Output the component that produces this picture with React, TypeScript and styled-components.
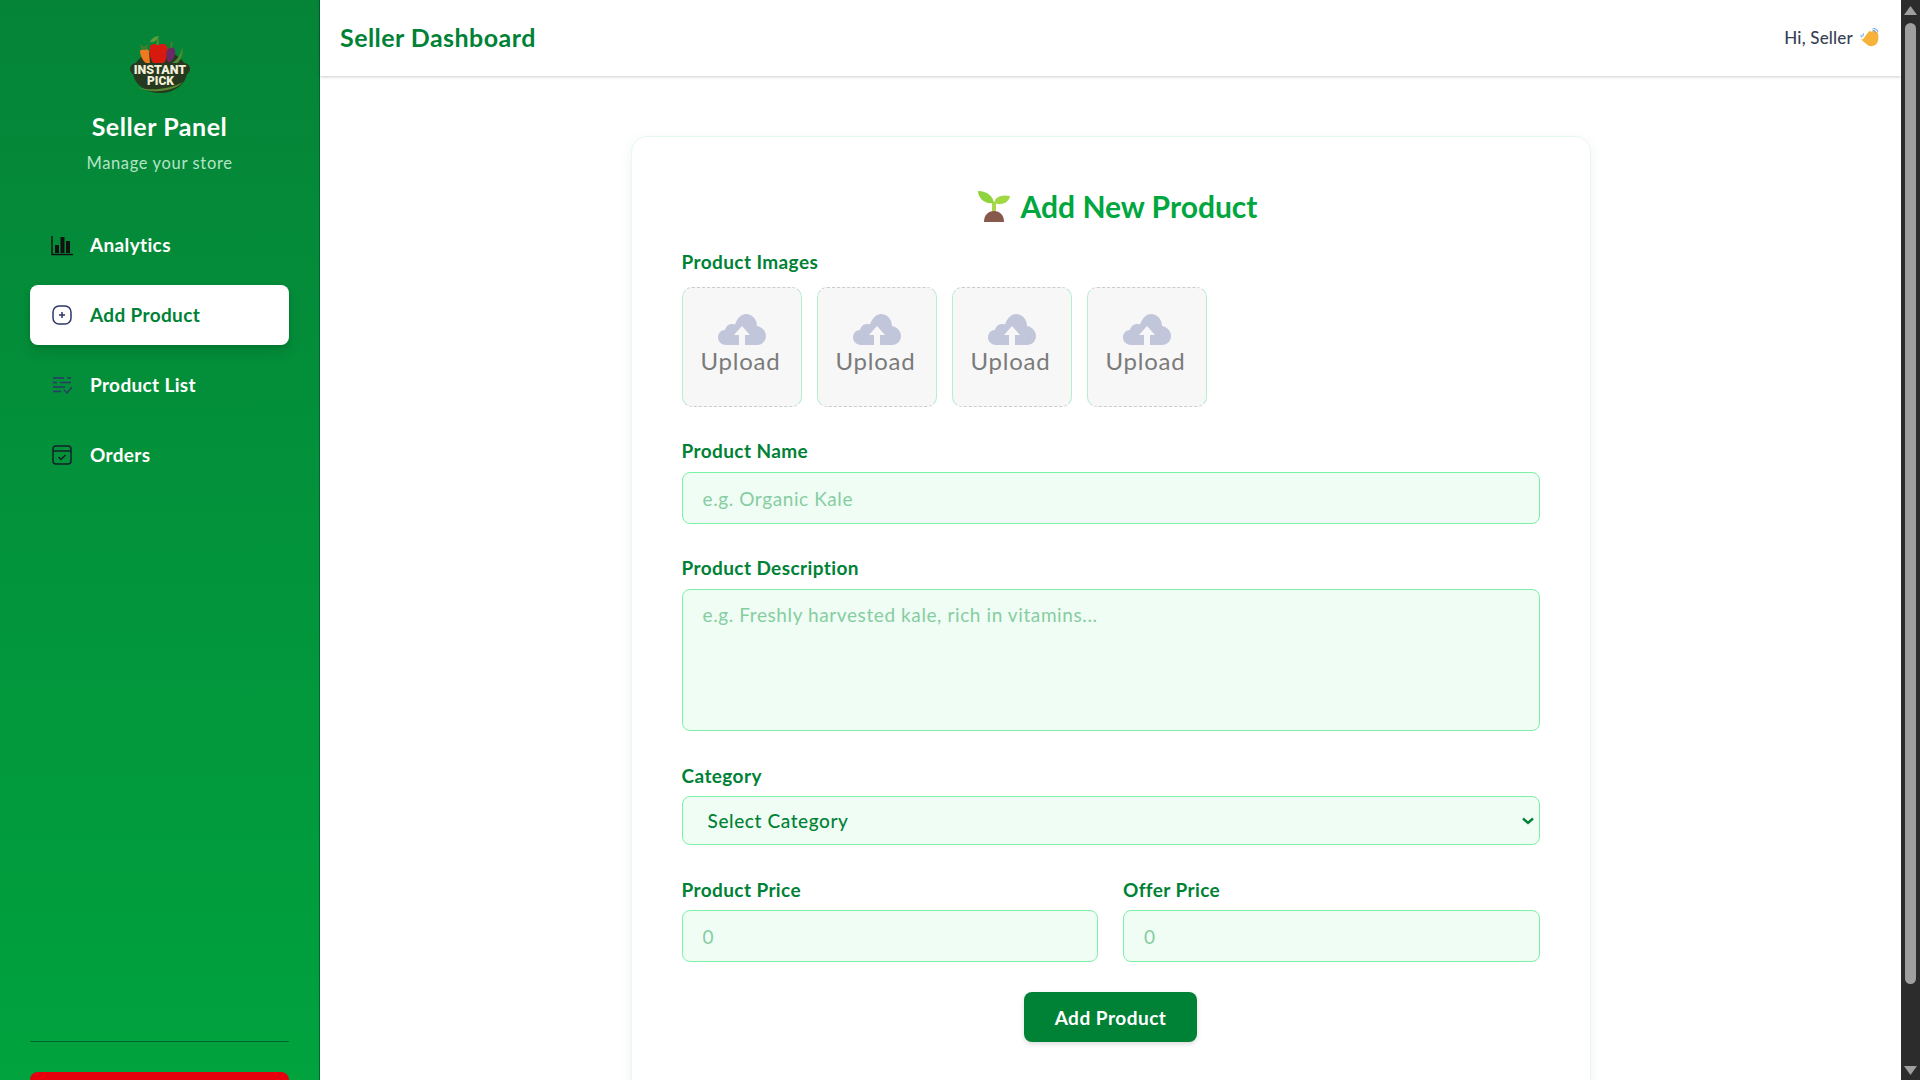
import React from "react";
import styled, { createGlobalStyle } from "styled-components";

const chevron = `data:image/svg+xml,%3Csvg xmlns='http://www.w3.org/2000/svg' width='12' height='8'%3E%3Cpath d='M1 1.500 L6 6 L11 1.500' fill='none' stroke='%23008236' stroke-width='2.400'/%3E%3C/svg%3E`;

const Global = createGlobalStyle`
  * { box-sizing: border-box; }
  html { background: #fff; }
  body { margin: 0; font-family: Lato, "Noto Sans", sans-serif; color: #364153; }
  input::placeholder, textarea::placeholder { color: #86cda2; opacity: 1; }
`;

const Page = styled.div`display: flex; min-height: 1171px; padding-right: 19px;`;

const ScrollRail = styled.div`
  position: fixed; top: 0; right: 0; bottom: 0; width: 19px; z-index: 10; background: #2c2c2c;
  display: flex; flex-direction: column; align-items: center; padding: 6px 0 5px;
`;
const ScrollArrow = styled.svg`width: 13px; height: 9px; flex: none; fill: #9f9f9f;`;
const ScrollThumb = styled.div`width: 11px; height: 961px; margin: 8px 0 auto; border-radius: 6px; background: #9f9f9f;`;

const Sidebar = styled.aside`
  width: 320px; flex: none; display: flex; flex-direction: column;
  background: linear-gradient(180deg, #058437 0%, #00a03e 85%, #00a63e 100%);
  border-right: 1px solid #016630;
  padding: 35px 30px 50px;
`;
const Brand = styled.div`display: flex; flex-direction: column; align-items: center;`;
const LogoBox = styled.div`width: 60px; height: 60px; display: flex;`;
const PanelTitle = styled.h2`margin: 15px 0 0; font-size: 25px; line-height: 32px; font-weight: 700; letter-spacing: .55px; color: #fff;`;
const PanelSub = styled.p`margin: 9px 0 0; font-size: 16.5px; line-height: 24px; letter-spacing: .65px; color: #b4e4c6;`;
const Nav = styled.nav`display: flex; flex-direction: column; gap: 10px; margin-top: 40px;`;
const NavItem = styled.a<{ $active?: boolean }>`
  display: flex; align-items: center; gap: 16px; height: 60px; padding: 0 20px;
  border-radius: 8px; font-size: 19px; font-weight: 700; letter-spacing: .35px;
  color: ${(p) => (p.$active ? "#008236" : "#fff")};
  background: ${(p) => (p.$active ? "#fff" : "transparent")};
  box-shadow: ${(p) => (p.$active ? "0 8px 14px rgba(0,0,0,.1), 0 2px 4px rgba(0,0,0,.1)" : "none")};
`;
const NavLabel = styled.span`margin-top: -2px;`;
const NavIcon = styled.svg`width: 24px; height: 24px; flex: none;`;
const SideFoot = styled.div`margin-top: auto; border-top: 1px solid #016630; padding-top: 30px;`;
const Logout = styled.button`
  display: block; width: 100%; height: 49px; border: 0; border-radius: 8px;
  background: #e7000b; color: #fff; font: 700 18px Lato, sans-serif;
`;

const Main = styled.div`flex: 1; min-width: 0; display: flex; flex-direction: column;`;
const Header = styled.header`
  position: relative; z-index: 1;
  height: 76px; flex: none; display: flex; align-items: center; justify-content: space-between;
  padding: 0 22px 3px 20px; background: #fff; box-shadow: 0 1px 3px rgba(0,0,0,.2);
`;
const HeaderTitle = styled.h1`margin: 0; font-size: 25px; font-weight: 700; letter-spacing: .45px; color: #008236;`;
const Greeting = styled.div`display: flex; align-items: center; gap: 7px; margin-top: 2px; font-size: 17px; font-weight: 500; letter-spacing: .2px; color: #364153;`;
const Content = styled.main`flex: 1; display: flex; justify-content: center; padding: 60px 0; background: #fff;`;
const Card = styled.form`
  width: 960px; height: 975px; background: #fff; border: 1px solid #e6f9ed; border-radius: 16px;
  padding: 47px 50px; box-shadow: 0 4px 14px rgba(0,0,0,.06); display: flex; flex-direction: column;
`;
const CardTitle = styled.h2`
  margin: 0; display: flex; align-items: center; justify-content: center; gap: 11px; height: 44px;
  font-size: 30px; font-weight: 700; color: #00a63e; padding-left: 14px;
`;
const Field = styled.div`display: flex; flex-direction: column; min-width: 0; flex: 1;`;
const Label = styled.label<{ $gap?: number }>`
  font-size: 19px; line-height: 26px; font-weight: 700; letter-spacing: .4px; color: #008236;
  margin-bottom: ${(p) => p.$gap ?? 8}px;
`;
const Uploads = styled.div`display: flex; gap: 15px;`;
const UploadBox = styled.div`
  width: 120px; height: 120px; padding-bottom: 6px; border-width: 1px; border-style: dashed solid; border-color: #c8cfc9 #b5f0cc;
  border-radius: 10px; background: #f7f7f7;
  display: flex; flex-direction: column; align-items: center; justify-content: center;
`;
const UploadText = styled.span`font-size: 24px; line-height: 28px; letter-spacing: .8px; color: #7b7b7b; margin-left: -2px;`;
const TextInput = styled.input`
  width: 100%; height: 52px; padding: 0 20px; border: 1px solid #7bf1a8; border-radius: 8px; outline: 0;
  background: #f0fdf4; font: 400 19px Lato, sans-serif; letter-spacing: .6px;
`;
const TextArea = styled.textarea`
  width: 100%; height: 142px; padding: 12px 20px; border: 1px solid #7bf1a8; border-radius: 8px; outline: 0; resize: none;
  background: #f0fdf4; font: 400 19px/26px Lato, sans-serif; letter-spacing: .6px; display: block;
`;
const SelectBox = styled.select`
  width: 100%; height: 49px; padding: 0 25px; border: 1px solid #7bf1a8; border-radius: 8px; outline: 0;
  appearance: none; background: #f0fdf4 url("${chevron}") right 5px center no-repeat;
  color: #008236; font: 500 19px Lato, sans-serif; letter-spacing: .6px;
`;
const Row = styled.div`display: flex; gap: 25px;`;
const Spaced = styled.div<{ $top: number }>`margin-top: ${(p) => p.$top}px;`;
const Submit = styled.button`
  align-self: center; width: 173px; height: 50px; margin-top: 30px; border: 0; border-radius: 8px;
  background: #008236; color: #fff; font: 700 19px Lato, sans-serif; letter-spacing: .5px;
  box-shadow: 0 2px 5px rgba(0,0,0,.15);
`;
const EmojiSvg = styled.svg<{ $w: number }>`width: ${(p) => p.$w}px; height: ${(p) => p.$w}px; flex: none;`;
const CloudSvg = styled.svg`width: 48px; height: 32px; margin-bottom: 2px;`;

const Logo = () => (
  <svg viewBox="0 0 60 60" width="60" height="60">
    <path d="M20 7c1-3 5-6 9-6-1 3-4 7-9 6z" fill="#5f9c3e" />
    <ellipse cx="30" cy="37" rx="27" ry="21" fill="#26391f" />
    <path d="M10 16c2-3 7-3 9 0l1 13h-3C13 26 10 21 10 16z" fill="#ee7a20" />
    <path d="M10 9l4 3 4-3-2 6h-4z" fill="#4c7d2f" />
    <path d="M20 11c3-3 6-2 8-1 3-1 7-2 9 1 1 5 0 13-3 17-4 2-8 2-11 0-3-4-4-12-3-17z" fill="#d8190f" />
    <path d="M27 4h2v6h-3z" fill="#4c8a2e" />
    <path d="M38 14c3-3 6-2 7 1 1 5-2 10-6 13-3-3-4-10-1-14z" fill="#6b2a66" />
    <path d="M41 7l2 0-1 6-2 0z" fill="#4c7d2f" />
    <path d="M42 28c4-2 9-8 10-16 2 6-1 14-6 17z" fill="#4f8a34" />
    <rect x="0" y="28" width="60" height="12" rx="6" fill="#26391f" />
    <text x="30" y="39" textAnchor="middle" fontFamily="Roboto, sans-serif" fontWeight="900" fontSize="12.500" fill="#f2efd9">INSTANT</text>
    <text x="30.500" y="49.500" textAnchor="middle" fontFamily="Roboto, sans-serif" fontWeight="900" fontSize="12" fill="#f2efd9">PICK</text>
    <path d="M7 52c12 4 32 3 46-5-8 10-34 12-46 5z" fill="#5b8a32" />
  </svg>
);

const Sprout = () => (
  <EmojiSvg $w={32} viewBox="0 0 32 32">
    <path d="M14 12h4v12h-4z" fill="#a9d64a" />
    <path d="M16 13C15 6 9 1 0 1c0 7 7 14 16 12z" fill="#8fd33d" />
    <path d="M16 13c1-6 7-9 16-7-1 7-9 10-16 7z" fill="#a3d845" />
    <path d="M6 32c0-7 4-11 10-11s10 4 10 11z" fill="#87594c" />
  </EmojiSvg>
);

const Wave = () => (
  <EmojiSvg $w={19} viewBox="0 0 20 20">
    <path d="M3 12l6-8c1-1 2-1 3 0l2-1c1-1 2 0 2 1l1 0c1 0 2 1 2 2 1 5 0 10-3 12-3 2-7 1-9-1l-5-4c-1-1 0-2 1-1z" fill="#f7b23b" />
    <path d="M1 7c0 1 0 2 1 3M4 6c-1 1-1 2-1 3M13 0c2 0 5 2 6 4M13 2c2 0 3 1 4 3" stroke="#6aa5e0" strokeWidth="1.100" fill="none" />
  </EmojiSvg>
);

const Cloud = () => (
  <CloudSvg viewBox="0 0 48 32">
    <path d="M8 32C3 32 0 28 0 24.500 0 20 3 17 7 17c1-4 4-6 7-6 1 0 2 0 3 .6C19 5 24 1 28 1c6 0 11 5 11 12 5 1 9 5 9 10 0 5-4 9-9 9z" fill="#c1c6db" />
    <path d="M24 13l8 9h-5v10h-6V22h-5z" fill="#f7f7f7" />
  </CloudSvg>
);

const UploadSlot = () => (
  <UploadBox>
    <Cloud />
    <UploadText>Upload</UploadText>
  </UploadBox>
);

export default function App() {
  return (
    <>
      <Global />
      <ScrollRail>
        <ScrollArrow viewBox="0 0 13 9"><path d="M6.500 0 13 9H0z" /></ScrollArrow>
        <ScrollThumb />
        <ScrollArrow viewBox="0 0 13 9"><path d="M6.500 9 13 0H0z" /></ScrollArrow>
      </ScrollRail>
      <Page>
        <Sidebar>
          <Brand>
            <LogoBox><Logo /></LogoBox>
            <PanelTitle>Seller Panel</PanelTitle>
            <PanelSub>Manage your store</PanelSub>
          </Brand>
          <Nav>
            <NavItem>
              <NavIcon viewBox="0 0 24 24">
                <path d="M2 3v18.500h21" stroke="#111" strokeWidth="1.400" fill="none" />
                <path d="M5 12h4v8H5zM10.500 4h4v16h-4zM16 8h4v12h-4z" fill="#111" />
              </NavIcon>
              <NavLabel>Analytics</NavLabel>
            </NavItem>
            <NavItem $active>
              <NavIcon viewBox="0 0 24 24" fill="none" stroke="#2e3768" strokeWidth="1.500">
                <rect x="3" y="3" width="18" height="18" rx="6" />
                <path d="M12 9v6M9 12h6" />
              </NavIcon>
              <NavLabel>Add Product</NavLabel>
            </NavItem>
            <NavItem>
              <NavIcon viewBox="0 0 24 24" fill="none" stroke="#2e3768" strokeWidth="1.300">
                <path d="M3 5h11M17 5h4M3 9.500h4M10 9.500h11M3 14h12M3 18.500h8M14 17l3 3 5-6" />
              </NavIcon>
              <NavLabel>Product List</NavLabel>
            </NavItem>
            <NavItem>
              <NavIcon viewBox="0 0 24 24" fill="none" stroke="#14202b" strokeWidth="1.500">
                <rect x="3" y="3" width="18" height="18" rx="3" />
                <path d="M3 8h18M8.500 14l2.500 2.500 4.500-4.500" />
              </NavIcon>
              <NavLabel>Orders</NavLabel>
            </NavItem>
          </Nav>
          <SideFoot>
            <Logout type="button">Logout</Logout>
          </SideFoot>
        </Sidebar>
        <Main>
          <Header>
            <HeaderTitle>Seller Dashboard</HeaderTitle>
            <Greeting>Hi, Seller <Wave /></Greeting>
          </Header>
          <Content>
            <Card>
              <CardTitle><Sprout />Add New Product</CardTitle>
              <Spaced $top={21}>
                <Field>
                  <Label $gap={12}>Product Images</Label>
                  <Uploads>
                    <UploadSlot /><UploadSlot /><UploadSlot /><UploadSlot />
                  </Uploads>
                </Field>
              </Spaced>
              <Spaced $top={31}>
                <Field>
                  <Label>Product Name</Label>
                  <TextInput placeholder="e.g. Organic Kale" />
                </Field>
              </Spaced>
              <Spaced $top={31}>
                <Field>
                  <Label>Product Description</Label>
                  <TextArea placeholder="e.g. Freshly harvested kale, rich in vitamins..." />
                </Field>
              </Spaced>
              <Spaced $top={32}>
                <Field>
                  <Label $gap={7}>Category</Label>
                  <SelectBox><option>Select Category</option></SelectBox>
                </Field>
              </Spaced>
              <Spaced $top={32}>
                <Row>
                  <Field>
                    <Label $gap={7}>Product Price</Label>
                    <TextInput placeholder="0" />
                  </Field>
                  <Field>
                    <Label $gap={7}>Offer Price</Label>
                    <TextInput placeholder="0" />
                  </Field>
                </Row>
              </Spaced>
              <Submit type="button">Add Product</Submit>
            </Card>
          </Content>
        </Main>
      </Page>
    </>
  );
}
